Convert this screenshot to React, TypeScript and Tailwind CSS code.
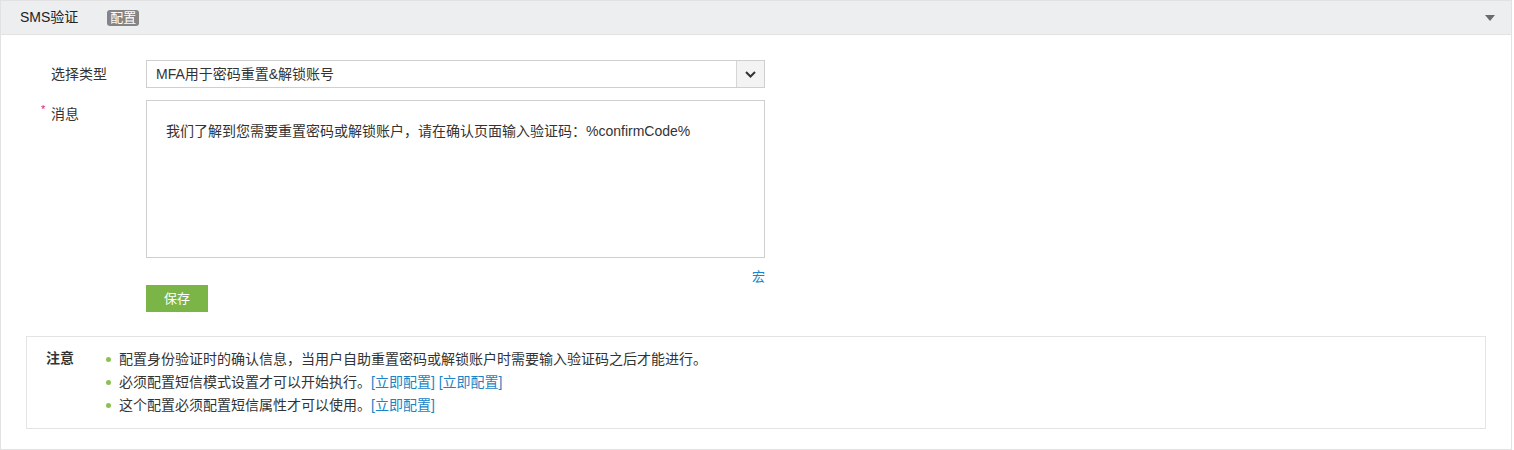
const font = "font-['Liberation_Sans','Noto_Sans_CJK_SC',sans-serif]"

const Link = ({ children }: { children: React.ReactNode }) => (
    <a href="#" className="text-[#1a84c6] hover:underline">
        [{children}]
    </a>
)

const notes: React.ReactNode[] = [
    "配置身份验证时的确认信息，当用户自助重置密码或解锁账户时需要输入验证码之后才能进行。",
    <>
        必须配置短信模式设置才可以开始执行。<Link>立即配置</Link> <Link>立即配置</Link>
    </>,
    <>
        这个配置必须配置短信属性才可以使用。<Link>立即配置</Link>
    </>,
]

const App = () => {
    return (
        <div className={`${font} w-[1512px] h-[450px] bg-white text-[14px] text-[#333]`}>
            <div className="h-full border border-[#e2e2e2] flex flex-col">
                {/* header */}
                <div className="h-[34px] shrink-0 bg-[#eceeef] border-b border-[#e2e2e2] flex items-center pl-[19px] pr-[16px]">
                    <span className="text-[14px] text-[#222]">SMS验证</span>
                    <span className="ml-[29px] bg-[#858585] text-white text-[13px] leading-[16px] px-[3px] rounded-[3px]">
                        配置
                    </span>
                    <span className="ml-auto w-0 h-0 border-l-[5px] border-r-[5px] border-t-[6px] border-l-transparent border-r-transparent border-t-[#6b6b6b]" />
                </div>

                {/* form */}
                <div className="pt-[25px] pl-[50px]">
                    <div className="flex items-center">
                        <label className="w-[95px]">选择类型</label>
                        <div className="w-[619px] h-[28px] border border-[#cfcfcf] flex items-center">
                            <span className="pl-[9px] flex-1">MFA用于密码重置&amp;解锁账号</span>
                            <span className="w-[28px] h-full bg-[#f3f3f3] border-l border-[#d6d6d6] flex items-center justify-center">
                                <svg width="11" height="7" viewBox="0 0 11 7" fill="none">
                                    <path d="M1 1l4.5 4.5L10 1" stroke="#333" strokeWidth="2" />
                                </svg>
                            </span>
                        </div>
                    </div>

                    <div className="flex mt-[12px]">
                        <label className="w-[95px] pt-[4px] relative">
                            <span className="absolute -left-[10px] top-[1px] text-[#e0245e] text-[11px]">*</span>
                            消息
                        </label>
                        <div className="w-[619px] h-[158px] border border-[#cfcfcf] pt-[20px] pl-[19px] leading-[20px]">
                            我们了解到您需要重置密码或解锁账户，请在确认页面输入验证码：%confirmCode%
                        </div>
                    </div>

                    <div className="ml-[95px] w-[619px] flex justify-end mt-[11px]">
                        <a href="#" className="text-[#1a84c6] text-[13px] leading-[16px]">宏</a>
                    </div>

                    <div className="ml-[95px]">
                        <button className="w-[62px] h-[27px] bg-[#7cb547] text-white text-[13px]">保存</button>
                    </div>
                </div>

                {/* notice */}
                <div className="mx-[25px] mt-[24px] border border-[#e4e4e4] py-[11px] pl-[19px] flex">
                    <span className="w-[60px] font-bold leading-[21px]">注意</span>
                    <ul className="leading-[23px] text-[14px]">
                        {notes.map((n, i) => (
                            <li key={i} className="flex items-center">
                                <span className="w-[5px] h-[5px] rounded-full bg-[#8cc152] mr-[8px]" />
                                <span>{n}</span>
                            </li>
                        ))}
                    </ul>
                </div>
            </div>
        </div>
    )
}

export default App
